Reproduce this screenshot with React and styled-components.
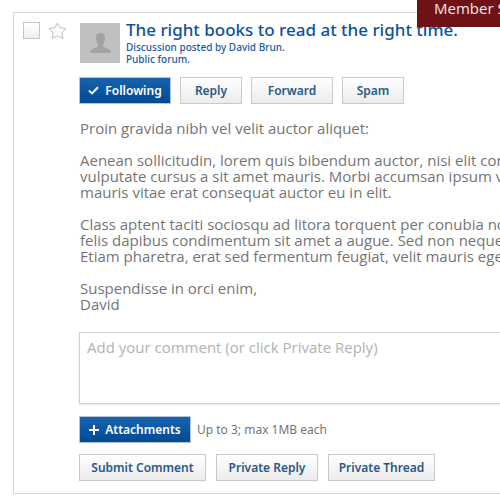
import React, { useState } from 'react';
import styled, { createGlobalStyle, css } from 'styled-components';

const GlobalStyle = createGlobalStyle`
  * {
    box-sizing: border-box;
  }

  body {
    margin: 0;
    background-color: #fff;
    color: #757575;
    font-family: "Noto Sans", "Open Sans", sans-serif;
    overflow-x: hidden;
  }

  h1, p {
    margin: 0;
  }
`;

const Page = styled.main`
  position: relative;
  padding: 12px 0 7px 13px;
  overflow: hidden;
`;

const MemberTab = styled.button`
  position: absolute;
  top: 0;
  right: 0;
  z-index: 1;
  width: 83px;
  height: 27px;
  padding: 0 0 10px 17px;
  border: 0;
  background-color: #6f1215;
  color: #f3e8e8;
  font: 500 15px/17px "Open Sans", "Noto Sans", sans-serif;
  text-align: left;
  white-space: nowrap;
  overflow: hidden;
`;

const Card = styled.article`
  display: flex;
  padding: 9px 0 12px 9px;
  border: 1px solid #d6d6d6;
  border-right: 0;
`;

const Marks = styled.div`
  display: flex;
  flex: none;
  gap: 8px;
  width: 56px;
`;

const Checkbox = styled.input`
  appearance: none;
  width: 17px;
  height: 17px;
  margin: 0;
  border: 1px solid #c6c6c6;
  background: linear-gradient(#fff, #f0f0f0);
  &:checked {
    background: #0d56a4;
  }
`;

const StarButton = styled.button`
  width: 19px;
  height: 18px;
  padding: 0;
  border: 0;
  background: none;
  svg {
    display: block;
  }
`;

const Content = styled.div`
  flex: 1;
  min-width: 0;
  padding-top: 1px;
`;

const Header = styled.header`
  display: flex;
  gap: 6px;
  margin-bottom: 12px;
  padding-left: 1px;
`;

const Avatar = styled.svg`
  flex: none;
  width: 40px;
  height: 40px;
`;

const Title = styled.h1`
  margin-bottom: 4px;
  color: #0d52a0;
  font-size: 17px;
  font-weight: 500;
  line-height: 14px;
  white-space: nowrap;
`;

const Meta = styled.p`
  color: #1a5aa3;
  font-size: 10px;
  font-weight: 500;
  line-height: 12px;
`;

const Buttons = styled.div`
  display: flex;
  gap: ${({ $gap }) => $gap}px;
`;

const Button = styled.button`
  display: flex;
  align-items: center;
  justify-content: center;
  gap: 6px;
  width: ${({ $width }) => $width}px;
  height: 27px;
  padding: 0;
  border: 1px solid #c9c9c9;
  background: linear-gradient(#fff, #ebebeb);
  color: #285a85;
  font: 600 12px/16px "Noto Sans", "Open Sans", sans-serif;
  white-space: nowrap;
  cursor: pointer;

  ${({ $primary }) => $primary && css`
    border-color: #b4c4d8;
    background: linear-gradient(#1763ae, #004a93);
    color: #fff;
  `}
`;

const Message = styled.div`
  display: flex;
  flex-direction: column;
  gap: 16px;
  margin: 16px 0 20px;
  padding-left: 1px;
  font: 15px/16px "Open Sans", "Noto Sans", sans-serif;
  white-space: pre;
`;

const Comment = styled.textarea`
  display: block;
  width: 100%;
  height: 72px;
  margin-bottom: 12px;
  padding: 6px 7px;
  border: 1px solid #d2d2d2;
  border-right: 0;
  border-radius: 0;
  box-shadow: 0 1px 2px #e4e4e4;
  font: 15px/16px "Open Sans", "Noto Sans", sans-serif;
  resize: none;
  &::placeholder {
    color: #b2b2b2;
    opacity: 1;
  }
`;

const Attachments = styled.div`
  display: flex;
  align-items: center;
  gap: 6px;
  margin-bottom: 11px;
  font-size: 12px;
  line-height: 16px;
`;

const paragraphs = [
  'Proin gravida nibh vel velit auctor aliquet:',
  'Aenean sollicitudin, lorem quis bibendum auctor, nisi elit cons\nvulputate cursus a sit amet mauris. Morbi accumsan ipsum ve\nmauris vitae erat consequat auctor eu in elit.',
  'Class aptent taciti sociosqu ad litora torquent per conubia no\nfelis dapibus condimentum sit amet a augue. Sed non neque\nEtiam pharetra, erat sed fermentum feugiat, velit mauris eges',
  'Suspendisse in orci enim,\nDavid',
];

const App = () => {
  const [checked, setChecked] = useState(false);

  return (
    <>
      <GlobalStyle />
      <Page>
        <MemberTab>Member S</MemberTab>
        <Card>
          <Marks>
            <Checkbox
              type="checkbox"
              aria-label="Select discussion"
              checked={checked}
              onChange={(e) => setChecked(e.target.checked)}
            />
            <StarButton aria-label="Favorite">
              <svg width="19" height="18" viewBox="0 0 19 18">
                <path
                  d="M9.5 1 L12 5.6 L17.8 6.4 L14 10.8 L15 16.4 L9.5 14 L4 16.4 L5 10.8 L1.2 6.4 L7 5.6 Z"
                  fill="#fafafa"
                  stroke="#bebebe"
                  strokeLinejoin="round"
                />
              </svg>
            </StarButton>
          </Marks>
          <Content>
            <Header>
              <Avatar viewBox="0 0 40 40" aria-hidden="true">
                <rect width="40" height="40" fill="#c0c0c0" />
                <path
                  d="M20.5 10 C17.2 10 15.8 12 16 15 C16.1 18 17 20 18 21.4 V23.5 C17 25 10 25 10 30 H31 C31 25 24 25 23 23.5 V21.4 C24 20 24.9 18 25 15 C25.2 12 23.8 10 20.5 10 Z"
                  fill="#a3a3a3"
                />
              </Avatar>
              <div>
                <Title>The right books to read at the right time.</Title>
                <Meta>
                  Discussion posted by David Brun.
                  <br />
                  Public forum.
                </Meta>
              </div>
            </Header>
            <Buttons $gap={9}>
              <Button $primary $width={92}>
                <svg width="11" height="9" viewBox="0 0 11 9">
                  <path d="M1 4.6 L4 7.4 L10 1.2" fill="none" stroke="#fff" strokeWidth="2" />
                </svg>
                Following
              </Button>
              <Button $width={62}>Reply</Button>
              <Button $width={82}>Forward</Button>
              <Button $width={62}>Spam</Button>
            </Buttons>
            <Message>
              {paragraphs.map((text) => (
                <p key={text}>{text}</p>
              ))}
            </Message>
            <Comment
              aria-label="Comment"
              placeholder="Add your comment (or click Private Reply)"
            />
            <Attachments>
              <Button $primary $width={112}>
                <svg width="10" height="10" viewBox="0 0 10 10">
                  <path d="M5 0 V10 M0 5 H10" stroke="#fff" strokeWidth="2" />
                </svg>
                Attachments
              </Button>
              <span>Up to 3; max 1MB each</span>
            </Attachments>
            <Buttons $gap={10}>
              <Button $width={127}>Submit Comment</Button>
              <Button $width={102}>Private Reply</Button>
              <Button $width={107}>Private Thread</Button>
            </Buttons>
          </Content>
        </Card>
      </Page>
    </>
  );
};

export default App;
